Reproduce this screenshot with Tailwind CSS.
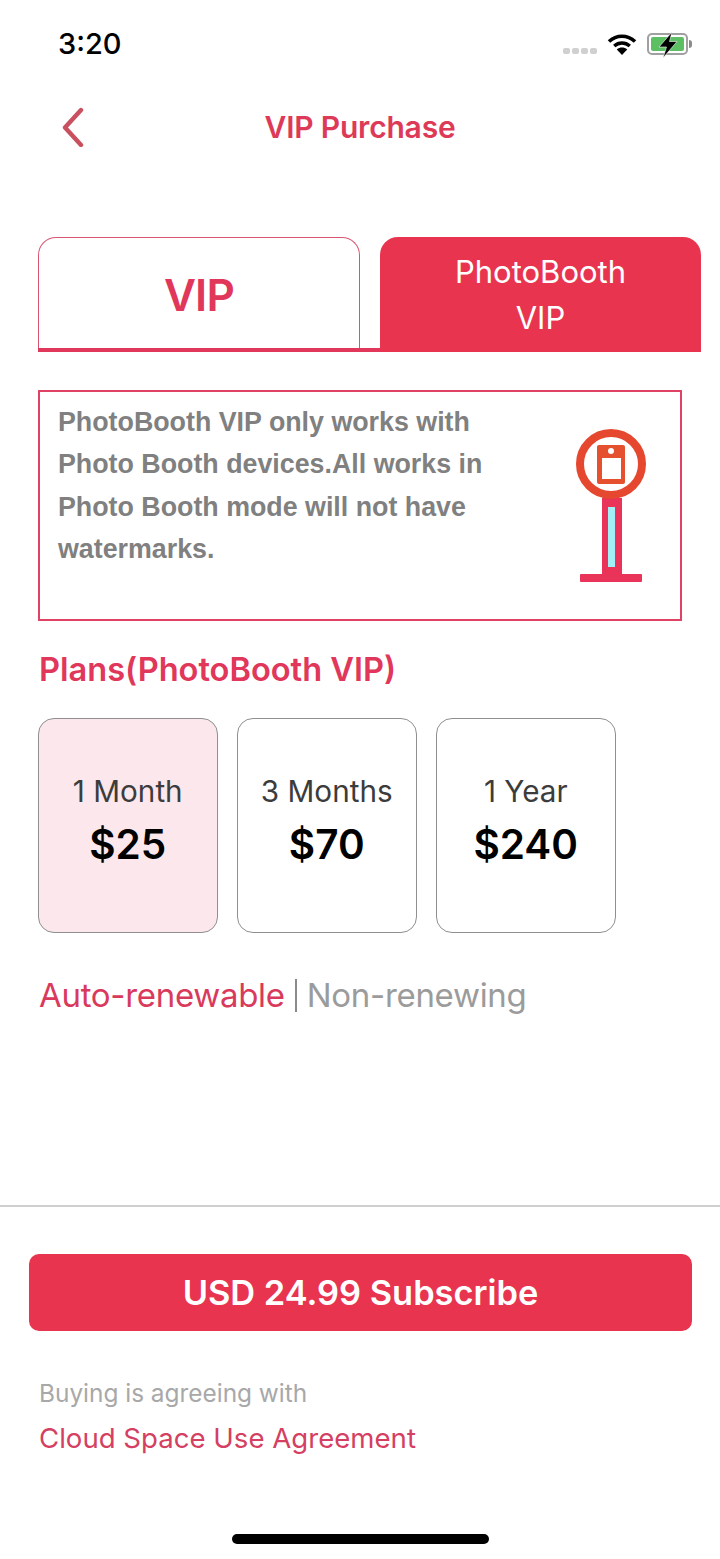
<!DOCTYPE html>
<html lang="en">
<head>
    <meta charset="UTF-8">
    <meta name="viewport" content="width=device-width, initial-scale=1.0">
    <title>VIP Purchase</title>
    <script src="https://cdn.jsdelivr.net/npm/@tailwindcss/browser@4"></script>
</head>
<body class="bg-white">
    <div class="w-[720px] h-[1559px] overflow-hidden flex flex-col font-['Inter',sans-serif]">
        <!-- status bar -->
        <div class="h-[88px] flex-none flex items-center justify-between pl-[58px] pr-[28px]">
            <span class="text-[29px] leading-none font-medium text-black -mt-[2px]">3:20</span>
            <div class="flex items-center">
                <div class="flex gap-[2px] mr-[10px] mt-[14px]">
                    <span class="w-[7px] h-[6px] rounded-[2px] bg-[#d0d0d0]"></span>
                    <span class="w-[7px] h-[6px] rounded-[2px] bg-[#d0d0d0]"></span>
                    <span class="w-[7px] h-[6px] rounded-[2px] bg-[#d0d0d0]"></span>
                    <span class="w-[7px] h-[6px] rounded-[2px] bg-[#d0d0d0]"></span>
                </div>
                <svg class="mr-[10px]" width="30" height="22" viewBox="0 0 30 22" fill="none">
                    <path d="M2 8.5C9.5 1.5 20.5 1.5 28 8.5" stroke="#000" stroke-width="3.6"/>
                    <path d="M7.2 13C11.8 9 18.2 9 22.8 13" stroke="#000" stroke-width="3.4"/>
                    <path d="M15 22L9.8 16.4C12.8 14 17.2 14 20.2 16.4Z" fill="#000"/>
                </svg>
                <div class="relative w-[41px] h-[22px] rounded-[5px] border-2 border-[#a0a0a0] p-[2px]">
                    <div class="w-full h-full rounded-[2px] bg-[#5cbf63]"></div>
                    <svg class="absolute left-[9px] -top-[3px]" width="20" height="26" viewBox="0 0 20 26">
                        <path d="M14 0L1 15H8.5L5 26L19 9.5H11.5Z" fill="#000" stroke="#fff" stroke-width="0.6"/>
                    </svg>
                </div>
                <div class="w-[3px] h-[8px] ml-[1px] rounded-r-sm bg-[#8a8a8a]"></div>
            </div>
        </div>

        <!-- nav -->
        <div class="relative h-[78px] flex-none flex items-center justify-center">
            <svg class="absolute left-[60px] top-[19px]" width="26" height="40" viewBox="0 0 26 40" fill="none">
                <path d="M21 3L5 20.5L21 38" stroke="#c9505f" stroke-width="4.4" stroke-linecap="round" stroke-linejoin="round"/>
            </svg>
            <h1 class="text-[30px] font-semibold text-[#dd3a58] tracking-[-0.2px]">VIP Purchase</h1>
        </div>

        <!-- tabs -->
        <div class="mt-[71px] ml-[38px] w-[663px] h-[115px] flex-none flex justify-between border-b-4 border-[#e0375a]">
            <div class="w-[322px] h-[111px] rounded-t-[18px] border border-b-0 border-[#d9546f] flex items-center justify-center pt-[3px]">
                <span class="text-[44px] font-semibold text-[#e0375a] tracking-[-0.8px]">VIP</span>
            </div>
            <div class="w-[321px] h-[115px] rounded-t-[18px] bg-[#e8344f] text-center text-white text-[31px] leading-[46px] pt-[12px]">
                PhotoBooth<br>VIP
            </div>
        </div>

        <!-- info box -->
        <div class="mt-[38px] ml-[38px] w-[644px] h-[231px] flex-none border-2 border-[#df4264] flex justify-between pl-[18px] pr-[34px]">
            <p class="pt-[9px] w-[460px] text-[26.8px] leading-[42.4px] font-bold text-[#808080] font-['Liberation_Sans',sans-serif]">PhotoBooth VIP only works with Photo Booth devices.All works in Photo Booth mode will not have watermarks.</p>
            <svg class="mt-[36px]" width="70" height="156" viewBox="0 0 70 156" fill="none">
                <path d="M26 70H46V146H26Z" fill="#ea3358"/>
                <rect x="32" y="79" width="7" height="60" fill="#a2eff6"/>
                <rect x="4" y="146" width="62" height="8" rx="1" fill="#ea3358"/>
                <circle cx="35" cy="36" r="31" stroke="#e5472f" stroke-width="8"/>
                <rect x="21" y="17" width="28" height="39" rx="2" fill="#e5502f"/>
                <rect x="26" y="30" width="19" height="21" fill="#fff"/>
                <circle cx="35" cy="23" r="3" fill="#fff"/>
            </svg>
        </div>

        <!-- plans -->
        <h2 class="mt-[29px] ml-[39px] text-[32.6px] leading-[38px] font-semibold text-[#e0375a]">Plans(PhotoBooth VIP)</h2>
        <div class="mt-[30px] ml-[38px] flex gap-[19.5px]">
            <div class="w-[179.5px] h-[215px] rounded-[16px] border border-[#8f8f8f] bg-[#fbe7ec] flex flex-col items-center pt-[54px]">
                <span class="text-[29.7px] leading-[36px] text-[#3c3c3c]">1 Month</span>
                <span class="mt-[13px] text-[40.5px] leading-[46px] font-semibold text-black">$25</span>
            </div>
            <div class="w-[179.5px] h-[215px] rounded-[16px] border border-[#8f8f8f] flex flex-col items-center pt-[54px]">
                <span class="text-[29.7px] leading-[36px] text-[#3c3c3c]">3 Months</span>
                <span class="mt-[13px] text-[40.5px] leading-[46px] font-semibold text-black">$70</span>
            </div>
            <div class="w-[179.5px] h-[215px] rounded-[16px] border border-[#8f8f8f] flex flex-col items-center pt-[54px]">
                <span class="text-[29.7px] leading-[36px] text-[#3c3c3c]">1 Year</span>
                <span class="mt-[13px] text-[40.5px] leading-[46px] font-semibold text-black">$240</span>
            </div>
        </div>
        <div class="mt-[41px] ml-[39px] flex items-center text-[33px] leading-[42px] tracking-[-0.3px]">
            <span class="text-[#d93a5c]">Auto-renewable</span>
            <span class="w-[2px] h-[33px] bg-[#8a8a8a] mx-[10px]"></span>
            <span class="text-[#9b9b9b]">Non-renewing</span>
        </div>

        <!-- footer -->
        <div class="mt-[189px] h-[2px] flex-none bg-[#cfcfcf]"></div>
        <button class="mt-[47px] ml-[29px] w-[663px] h-[77px] flex-none rounded-[10px] bg-[#e8344f] text-white text-[34.4px] font-semibold">USD 24.99 Subscribe</button>
        <p class="mt-[46px] ml-[39px] text-[24.4px] leading-[32px] text-[#a8a8a8]">Buying is agreeing with</p>
        <p class="mt-[10px] ml-[39px] text-[27.6px] leading-[38px] text-[#d43f62]">Cloud Space Use Agreement</p>
        <div class="mt-[77px] mx-auto w-[257px] h-[10px] flex-none rounded-full bg-black"></div>
    </div>
</body>
</html>
